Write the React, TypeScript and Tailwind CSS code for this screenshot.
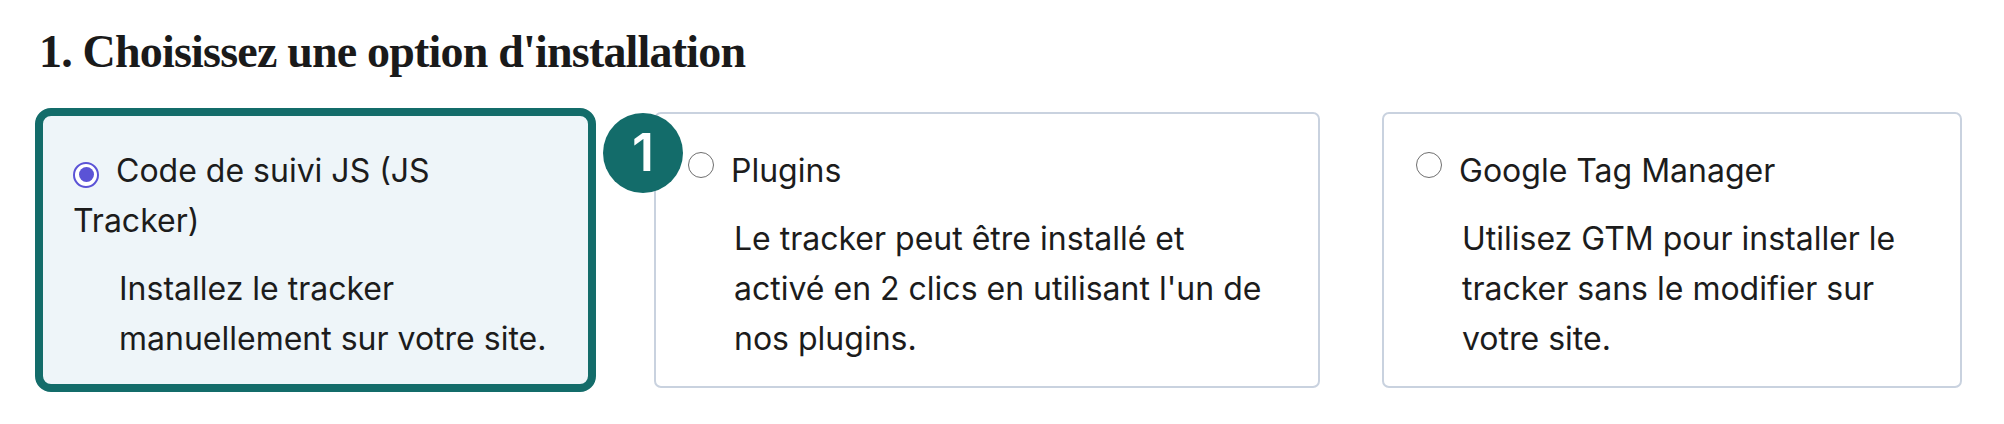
import React from 'react';

type Option = {
  id: string;
  title: string;
  desc: string;
  width: string;
  descPad: string;
};

const options: Option[] = [
  {
    id: 'js',
    title: 'Code de suivi JS (JS Tracker)',
    desc: 'Installez le tracker manuellement sur votre site.',
    width: 'w-[553px]',
    descPad: 'pr-0',
  },
  {
    id: 'plugins',
    title: 'Plugins',
    desc: "Le tracker peut être installé et activé en 2 clics en utilisant l'un de nos plugins.",
    width: 'w-[666px]',
    descPad: 'pr-[18px]',
  },
  {
    id: 'gtm',
    title: 'Google Tag Manager',
    desc: 'Utilisez GTM pour installer le tracker sans le modifier sur votre site.',
    width: 'w-[580px]',
    descPad: 'pr-0',
  },
];

function Radio({ checked }: { checked: boolean }) {
  if (checked) {
    return (
      <span className="inline-flex items-center justify-center w-[26px] h-[26px] rounded-full border-[2px] border-[#5b53d6] bg-white mr-[17px] mb-[4px] align-baseline">
        <span className="w-[15px] h-[15px] rounded-full bg-[#5b53d6]" />
      </span>
    );
  }
  return (
    <span className="inline-block w-[26px] h-[26px] rounded-full border-[1.5px] border-[#6f6f6f] bg-white mr-[17px] mb-[4px] align-baseline" />
  );
}

export default function App() {
  const selected = 'js';

  return (
    <div className="min-h-screen bg-white pl-[39px] pt-[25px] text-[#1c1c1c]" style={{ fontFamily: 'Inter, "Noto Sans", sans-serif' }}>
      <h2 className="text-[46px] leading-[54px] font-bold tracking-[-0.8px] text-[#1a1a1a]" style={{ fontFamily: '"Liberation Serif", serif' }}>
        1. Choisissez une option d'installation
      </h2>

      <div className="mt-[33px] flex items-stretch gap-[62px]">
        {options.map((opt) => {
          const isSel = opt.id === selected;
          return (
            <div
              key={opt.id}
              className={`relative ${opt.width} border-[2px] pt-[32px] pb-[22px] px-[32px] ${
                isSel
                  ? 'bg-[#eef5f9] border-[#4f8fd6] outline-8 outline-[#136c6a] -outline-offset-4 rounded-[12px]'
                  : 'bg-white border-[#c9d2df] rounded-[7px]'
              }`}
            >
              {opt.id === 'plugins' && (
                <div className="absolute left-[-53px] top-[-1px] w-[80px] h-[80px] rounded-full bg-[#136c6a] flex items-center justify-center">
                  <span className="text-white text-[52px] leading-none font-semibold" style={{ fontFamily: 'Inter, sans-serif' }}>1</span>
                </div>
              )}
              <label className="block text-[32px] leading-[50px]">
                <Radio checked={isSel} />
                {opt.title}
              </label>
              <p className={`mt-[18px] pl-[46px] ${opt.descPad} text-[32px] leading-[50px]`}>{opt.desc}</p>
            </div>
          );
        })}
      </div>
    </div>
  );
}
